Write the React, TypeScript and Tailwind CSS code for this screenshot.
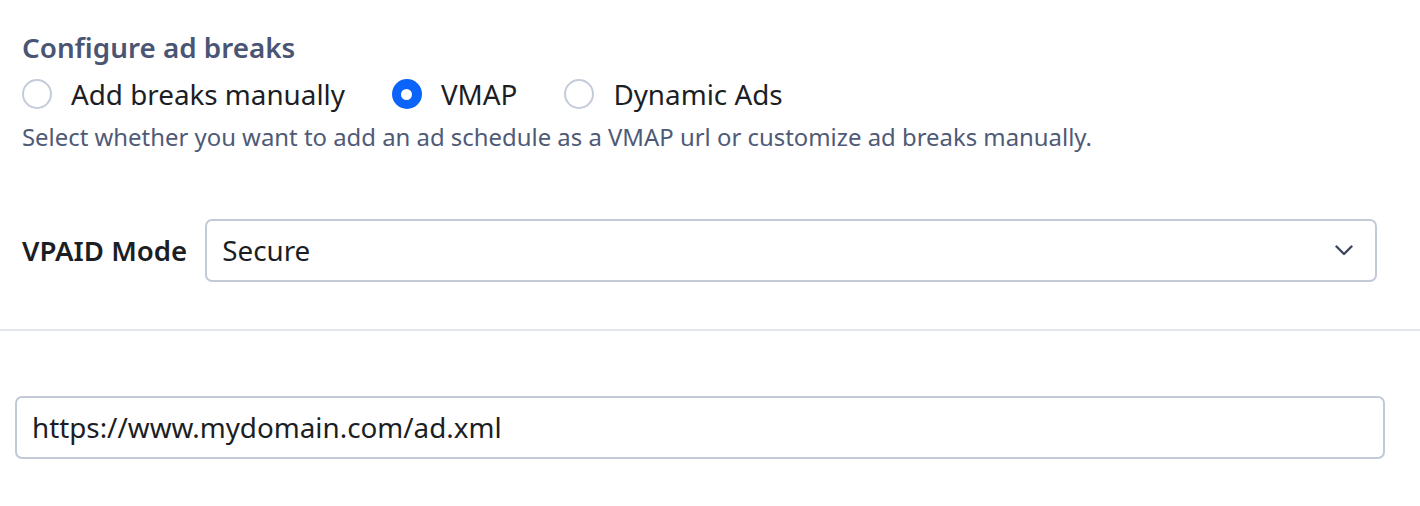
type RadioOptionProps = {
  label: string
  checked?: boolean
}

function RadioOption({ label, checked = false }: RadioOptionProps) {
  return (
    <label className="flex items-center gap-[19px]">
      {checked ? (
        <span className="flex h-[30px] w-[30px] items-center justify-center rounded-full bg-[#0a64fa]">
          <span className="h-[11px] w-[11px] rounded-full bg-white" />
        </span>
      ) : (
        <span className="h-[30px] w-[30px] rounded-full border-2 border-[#c5ccd9] bg-white" />
      )}
      <span className="text-[27.8px] leading-[34px] text-[#1b1e24]">{label}</span>
    </label>
  )
}

export default function App() {
  return (
    <div className="min-h-[506px] w-full bg-white pt-[30px] font-['Noto_Sans',sans-serif]">
      <div className="px-[22px]">
        <h2 className="text-[27.8px] font-semibold leading-[34px] text-[#4a5574]">
          Configure ad breaks
        </h2>

        <div className="mt-[13px] flex items-center gap-[47px]">
          <RadioOption label="Add breaks manually" />
          <RadioOption label="VMAP" checked />
          <RadioOption label="Dynamic Ads" />
        </div>

        <p className="mt-[12px] text-[23.9px] leading-[28px] text-[#4f5a77]">
          Select whether you want to add an ad schedule as a VMAP url or customize ad breaks manually.
        </p>

        <div className="mt-[68px] flex items-center gap-[18px] pr-[21px]">
          <span className="text-[27.6px] font-semibold text-[#1b1e24]">VPAID Mode</span>
          <div className="flex h-[63px] flex-1 items-center justify-between rounded-[7px] border-2 border-[#c3cad7] bg-white pl-[15px] pr-[22px]">
            <span className="text-[27.8px] text-[#1b1e24]">Secure</span>
            <svg width="18" height="11" viewBox="0 0 18 11" fill="none" className="text-[#3c4962]">
              <path d="M1.5 1.5L9 9L16.5 1.5" stroke="currentColor" strokeWidth="2.4" strokeLinecap="round" strokeLinejoin="round" />
            </svg>
          </div>
        </div>
      </div>

      <div className="mt-[47px] h-[2px] w-full bg-[#e2e5ea]" />

      <div className="px-[15px] pr-[35px] pt-[65px]">
        <div className="flex h-[63px] items-center rounded-[7px] border-2 border-[#c3cad7] bg-white px-[15px]">
          <span className="text-[27.8px] text-[#1b1e24]">https://www.mydomain.com/ad.xml</span>
        </div>
      </div>
    </div>
  )
}
